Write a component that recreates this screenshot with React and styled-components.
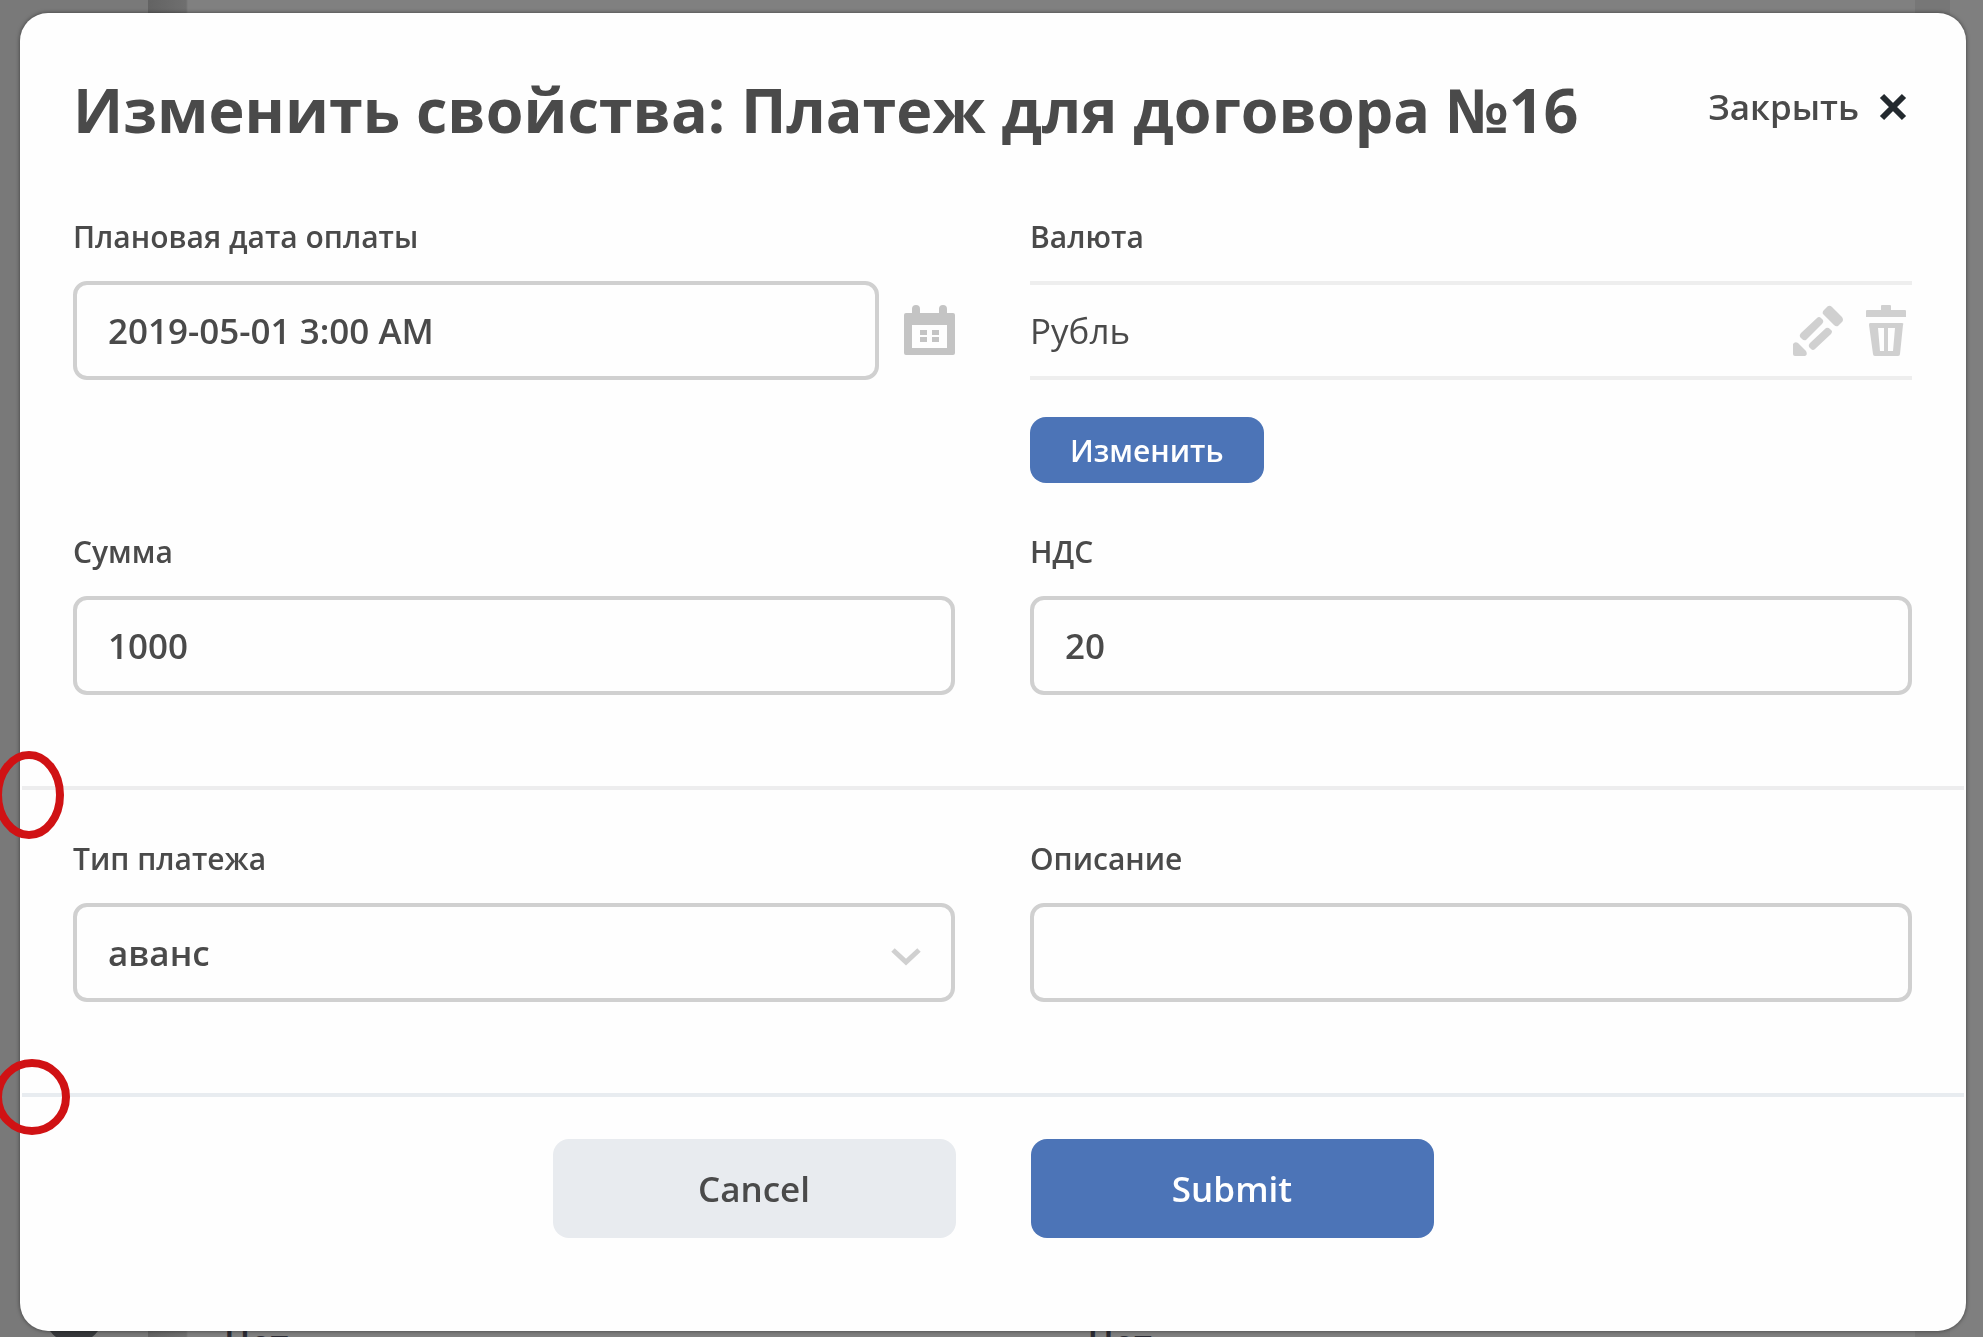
import React, { useState } from "react";
import styled, { createGlobalStyle } from "styled-components";

const GlobalStyle = createGlobalStyle`
  * {
    box-sizing: border-box;
  }
  body {
    margin: 0;
    background-color: #7f7f7f;
    color: #4a4a4a;
    font-family: "Open Sans", "Noto Sans", sans-serif;
  }
  button, input, select {
    font-family: inherit;
  }
`;

const Page = styled.div`
  display: flex;
  height: 100vh;
  overflow: hidden;
`;

const Sidebar = styled.aside`
  display: flex;
  flex-direction: column;
  align-items: center;
  justify-content: flex-end;
  width: 148px;
  background-color: #797979;
`;

const Avatar = styled.div`
  width: 60px;
  height: 60px;
  margin-bottom: -6px;
  flex-shrink: 0;
  border-radius: 50%;
  background-color: #36383b;
`;

const Content = styled.main`
  display: grid;
  grid-template-columns: 1fr 1fr;
  column-gap: 36px;
  align-items: end;
  flex: 1;
  padding-left: 76px;
  background: linear-gradient(to right, #636363 0, #6f6f6f 38px, #808080 40px);
`;

const Cell = styled.p`
  margin: 0 0 -32px;
  color: #2b2b33;
  font-size: 35px;
  font-weight: 600;
  line-height: 54px;
`;

const Scrollbar = styled.div`
  width: 35px;
  margin-right: 33px;
  background-color: #777;
`;

const Overlay = styled.div`
  position: fixed;
  inset: 0;
  padding: 13px 17px 7px 20px;
  overflow: hidden;
`;

const Modal = styled.form`
  border-radius: 28px;
  background-color: #fefefe;
  box-shadow: 0 0 4px rgba(0, 0, 0, 0.5);
`;

const Header = styled.header`
  display: flex;
  align-items: flex-start;
  justify-content: space-between;
  padding: 57px 59px 18px 53px;
`;

const Title = styled.h1`
  margin: 0;
  font-size: 61px;
  font-weight: 700;
  line-height: 80px;
`;

const CloseButton = styled.button`
  display: flex;
  align-items: center;
  gap: 20px;
  padding: 0;
  border: none;
  background: none;
  color: #4a4a4a;
  font-size: 35px;
  font-weight: 600;
  line-height: 74px;
  cursor: pointer;
`;

const Section = styled.section`
  position: relative;
  display: grid;
  grid-template-columns: 1fr 1fr;
  gap: 46px 75px;
  padding: 46px 54px 91px 53px;
`;

const Divider = styled.hr`
  height: 4px;
  margin: 0 2px;
  border: none;
  background-color: ${(props) => props.$color};
`;

const Field = styled.div`
  display: flex;
  flex-direction: column;
  align-items: stretch;
`;

const Label = styled.label`
  margin-bottom: 21px;
  font-size: 30px;
  font-weight: 600;
  line-height: 46px;
`;

const InputRow = styled.div`
  display: flex;
  align-items: center;
  gap: 25px;
`;

const Input = styled.input`
  width: 100%;
  min-width: 0;
  height: 99px;
  padding: 0 31px;
  border: 4px solid #d0d0d0;
  border-radius: 14px;
  background-color: #fefefe;
  color: #4a4a4a;
  font-size: 35px;
  font-weight: 600;
  &:focus {
    border-color: #4c74b7;
    outline: none;
  }
`;

const SelectWrapper = styled.div`
  position: relative;
  svg {
    position: absolute;
    top: 44px;
    right: 34px;
    pointer-events: none;
  }
`;

const Select = styled(Input)`
  display: block;
  appearance: none;
`;

const IconButton = styled.button`
  display: flex;
  flex-shrink: 0;
  padding: 0;
  border: none;
  background: none;
  color: ${(props) => props.$color || "#d0d0d0"};
  cursor: pointer;
`;

const Reference = styled.div`
  display: flex;
  align-items: center;
  gap: 23px;
  height: 99px;
  padding-right: 6px;
  border-top: 4px solid #eee;
  border-bottom: 4px solid #eee;
  font-size: 35px;
`;

const ReferenceName = styled.span`
  flex: 1;
`;

const Button = styled.button`
  border: none;
  border-radius: 16px;
  background-color: ${(props) => (props.$primary ? "#4c74b7" : "#e8ebef")};
  color: ${(props) => (props.$primary ? "#fff" : "#4a4a4a")};
  font-size: 35px;
  font-weight: 600;
  cursor: pointer;
`;

const SmallButton = styled(Button)`
  align-self: flex-start;
  height: 66px;
  margin-top: 37px;
  padding: 0 40px;
  font-size: 30px;
`;

const Footer = styled.footer`
  display: flex;
  justify-content: center;
  gap: 75px;
  padding: 42px 0 93px;
  ${Button} {
    width: 403px;
    height: 99px;
  }
`;

// red marks over the left ends of the dividers
const Mark = styled.svg`
  position: absolute;
  left: -20px;
  bottom: ${(props) => props.$bottom}px;
  z-index: 1;
  pointer-events: none;
`;

const CloseIcon = () => (
  <svg width="28" height="28" viewBox="0 0 28 28" fill="none" stroke="#23292e" strokeWidth="6" aria-hidden="true">
    <path d="M3 3L25 25M25 3L3 25" />
  </svg>
);

const CalendarIcon = () => (
  <svg width="51" height="51" viewBox="0 0 51 51" fill="currentColor" aria-hidden="true">
    <path
      fillRule="evenodd"
      d="M2 8H8V4a4 4 0 0 1 8 0V8H35V4a4 4 0 0 1 8 0V8H49a2 2 0 0 1 2 2V48a2 2 0 0 1-2 2H2a2 2 0 0 1-2-2V10a2 2 0 0 1 2-2ZM8 20V43H43V20Z"
    />
    <path d="M16 25h7v5h-7zM28 25h7v5h-7zM16 32h7v5h-7zM28 32h7v5h-7z" />
  </svg>
);

const PencilIcon = () => (
  <svg width="50" height="52" viewBox="0 0 50 52" fill="currentColor" aria-hidden="true">
    <path d="M33 3Q36-1 39 2L49 12Q51 15 49 17L45 21Q43 22 41 20L30 9Q29 7 31 5Z" />
    <path d="M24 13Q26 11 28 13L30 15Q31 17 29 19L13 35Q11 36 9 34L7 32Q6 30 8 28Z" />
    <path d="M33 23Q35 22 37 24L39 26Q39 28 38 29L22 44Q20 46 18 44L16 42Q15 40 17 38Z" />
    <path d="M0 39Q2 36 5 38L13 46Q15 50 12 51H2Q0 51 0 49Z" />
  </svg>
);

const TrashIcon = () => (
  <svg width="40" height="51" viewBox="0 0 40 51" fill="currentColor" aria-hidden="true">
    <path d="M1 5H15V1Q15 0 16 0H24Q25 0 25 1V5H39Q40 5 40 6V12H0V6Q0 5 1 5Z" />
    <path
      fillRule="evenodd"
      d="M4 18H36Q38 18 37 20L34 49Q34 51 32 51H9Q7 51 7 49L3 20Q3 18 4 18ZM12 23L14 46H18V23ZM22 23V46H27L29 23Z"
    />
  </svg>
);

const ChevronIcon = () => (
  <svg width="31" height="20" viewBox="0 0 31 20" fill="none" stroke="#d0d0d0" strokeWidth="5" aria-hidden="true">
    <path d="M3 3L16 15L29 3" />
  </svg>
);

function App() {
  const [form, setForm] = useState({
    date: "2019-05-01 3:00 AM",
    sum: "1000",
    vat: "20",
    type: "аванс",
    description: "",
  });

  const onChange = (e) => {
    setForm({ ...form, [e.target.name]: e.target.value });
  };

  return (
    <>
      <GlobalStyle />
      <Page aria-hidden="true">
        <Sidebar>
          <Avatar />
        </Sidebar>
        <Content>
          <Cell>Нет</Cell>
          <Cell>Нет</Cell>
        </Content>
        <Scrollbar />
      </Page>
      <Overlay>
        <Modal role="dialog" aria-labelledby="title" onSubmit={(e) => e.preventDefault()}>
          <Header>
            <Title id="title">Изменить свойства: Платеж для договора №16</Title>
            <CloseButton type="button">
              Закрыть
              <CloseIcon />
            </CloseButton>
          </Header>
          <Section>
            <Field>
              <Label htmlFor="date">Плановая дата оплаты</Label>
              <InputRow>
                <Input id="date" name="date" value={form.date} onChange={onChange} />
                <IconButton type="button" $color="#c4c4c4" aria-label="Календарь">
                  <CalendarIcon />
                </IconButton>
              </InputRow>
            </Field>
            <Field>
              <Label as="span">Валюта</Label>
              <Reference>
                <ReferenceName>Рубль</ReferenceName>
                <IconButton type="button" aria-label="Редактировать">
                  <PencilIcon />
                </IconButton>
                <IconButton type="button" aria-label="Удалить">
                  <TrashIcon />
                </IconButton>
              </Reference>
              <SmallButton type="button" $primary>Изменить</SmallButton>
            </Field>
            <Field>
              <Label htmlFor="sum">Сумма</Label>
              <Input id="sum" name="sum" value={form.sum} onChange={onChange} />
            </Field>
            <Field>
              <Label htmlFor="vat">НДС</Label>
              <Input id="vat" name="vat" value={form.vat} onChange={onChange} />
            </Field>
            <Mark $bottom={-54} width="70" height="90" fill="none" stroke="#d01214" strokeWidth="8">
              <ellipse cx="29" cy="45" rx="31" ry="40" />
            </Mark>
          </Section>
          <Divider $color="#ededee" />
          <Section>
            <Field>
              <Label htmlFor="type">Тип платежа</Label>
              <SelectWrapper>
                <Select as="select" id="type" name="type" value={form.type} onChange={onChange}>
                  <option>аванс</option>
                </Select>
                <ChevronIcon />
              </SelectWrapper>
            </Field>
            <Field>
              <Label htmlFor="description">Описание</Label>
              <Input id="description" name="description" value={form.description} onChange={onChange} />
            </Field>
            <Mark $bottom={-44} width="72" height="80" fill="none" stroke="#d01214" strokeWidth="8">
              <ellipse cx="32" cy="40" rx="34" ry="34" />
            </Mark>
          </Section>
          <Divider $color="#e8ecf0" />
          <Footer>
            <Button type="button">Cancel</Button>
            <Button type="submit" $primary>Submit</Button>
          </Footer>
        </Modal>
      </Overlay>
    </>
  );
}

export default App;
